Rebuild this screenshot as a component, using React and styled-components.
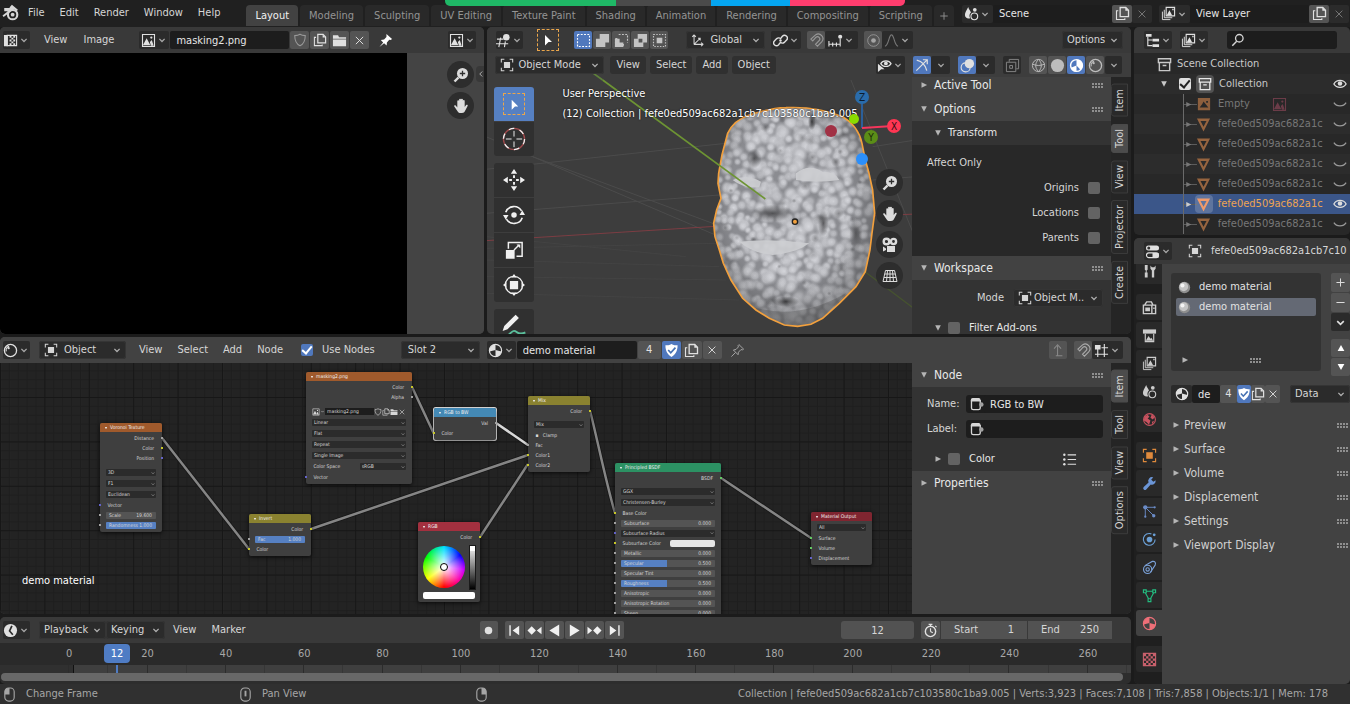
import React from 'react';
import styled, { createGlobalStyle, css } from 'styled-components';

const GlobalStyle = createGlobalStyle`
  * { box-sizing: border-box; }
  html, body { margin: 0; background: #1b1b1b; overflow: hidden; }
  body, button, input, select {
    font-family: "DejaVu Sans Condensed", "DejaVu Sans", sans-serif;
    font-size: 11px;
    line-height: 14px;
    color: #d6d6d6;
  }
  button, input, select { margin: 0; padding: 0; border: 0; background: none; outline: none; }
  svg { display: block; flex: none; }
`;

/* ---------- icons ---------- */

const S = { fill: 'none', stroke: 'currentColor', strokeWidth: 1.2 };
const F = { fill: 'currentColor', stroke: 'none' };

const ICONS = {
  blender: <><path d="M1 11.5 8.2 6H3V4.6h7L8.3 3.2 9.4 2l5 4.2" {...S} strokeWidth="1.8" /><circle cx="10" cy="10" r="4.4" {...S} strokeWidth="2" /><circle cx="10" cy="10" r="1.8" {...F} /></>,
  chevron: <path d="m4.500 6.500 3.500 3.500 3.500-3.500" {...S} strokeWidth="1.7" />,
  imageEditor: <><path d="M1 2h4v12H1z" {...F} /><path d="M4.500 2.500h10v11h-10z" {...S} /><path d="M7 3h2v2H7zM11 3h2v2h-2zM9 5h2v2H9zM7 7h2v2H7zM11 7h2v2h-2zM9 9h2v2H9zM7 11h2v2H7zM11 11h2v2h-2z" {...F} /></>,
  image: <><path d="M1.600 1.600h12.800v12.800H1.600z" {...S} /><path d="M2 13 6 5.500 10 13zM9.500 9.500l2-2 2 6h-3z" {...F} /><circle cx="11" cy="4.800" r="1.200" {...F} /></>,
  imageSolid: <path fillRule="evenodd" d="M1 1h14v14H1zM3 12h10L7.500 5 6 8zM10.500 4.500h2v2h-2z" {...F} />,
  shield: <path d="M8 1.500c2 1.300 4 1.500 6 1.500 0 6-2 9.500-6 11.500C4 12.500 2 9 2 3c2 0 4-.2 6-1.500z" {...S} />,
  shieldCheck: <><path d="M8 1c2 1.300 4.500 1.500 6.500 1.500 0 6.500-2.500 10-6.500 12.500C4 12.500 1.500 9 1.500 2.500 3.500 2.500 6 2.300 8 1z" {...F} /><path d="m4.500 7.500 2.700 3 5-5.500" fill="none" stroke="#4772b3" strokeWidth="1.800" /></>,
  copy: <><path d="M5.500 1.600h6L14.400 4.500v6.900H5.500z" {...S} strokeWidth="1.400" /><path d="M11 1.500V5h3.500z" {...F} /><path d="M3.500 5H1.600v9.400h8.900v-1.400" {...S} /></>,
  folder: <path d="M1 2.500h5.500l1 2H15V6H1zM1 7h14v7H1z" {...F} />,
  close: <path d="m3.500 3.500 9 9m0-9-9 9" {...S} />,
  pin: <path d="m9 1 6 5.500-1.500 1-1.500-.3L9.500 10l-.3 3.200L6.500 11l-5 4 4-5L3 7.500 6.500 7 9 4.300z" {...F} />,
  pinOutline: <path d="m9.500 1.700 5 4.800-1.200.8-1.600-.3-2.700 2.800-.4 2.700-5-5 2.800-.6 2.500-2.700-.2-1.700zM6 10l-4.500 4.500" {...S} strokeWidth="1" />,
  zoom: <><circle cx="9.500" cy="6.500" r="5.500" {...F} /><path d="m5.500 10.500-4 4" {...S} strokeWidth="2.400" /><path d="M9.500 3.800v5.400M6.800 6.500h5.400" stroke="#2e2e2e" strokeWidth="1.300" /></>,
  hand: <path d="M4.300 9.500V3.200a.9.900 0 0 1 1.800 0V7V1.800a.9.900 0 0 1 1.900 0V7V1.600a.9.900 0 0 1 1.900 0V7.300V3a.9.900 0 0 1 1.800 0v6l1.300-1.800c.9-.9 2.100-.2 1.600.8L12 13c-.5 1.200-1.500 2-3 2H7.500c-1.300 0-2-.5-2.800-1.600L1.300 8.600c-.6-1 .6-1.800 1.400-1z" {...F} />,
  camera: <><circle cx="4.500" cy="4.500" r="2.800" {...S} strokeWidth="2.400" /><circle cx="11.500" cy="4.500" r="2.600" {...S} strokeWidth="2.400" /><path d="M5 9h8v6H5zM1 9.500l3 2v1.500l-3 1.500z" {...F} /></>,
  gridPlane: <path d="M3.500 2.500h9l2.500 11H1zM2.800 6h10.500M2 9.500h12M8 2.500v11M5.500 2.500l-1 11M10.500 2.500l1 11" {...S} strokeWidth="1" />,
  view3d: <><path d="M1 6.500h7M0 11.500h13M5 5 3 15M10 9l-1 6" {...S} /><circle cx="11" cy="4.500" r="3.500" {...F} /></>,
  cursor: <path d="m5 3 7 7H8.500L5 13.500z" {...F} />,
  selBox: <path d="M1.600 1.600h12.800v12.800H1.600z" {...S} strokeDasharray="2 1.500" />,
  selExt: <path d="M5 1h10v9h-4v5H1V6h4z" {...F} />,
  selSub: <><path d="M5 1.600h9.400V10M1.600 6H5M1.600 6v8.400H10V11" {...S} strokeDasharray="2 1.500" /><path d="M1 6h5v4h4v5H1z" {...F} /></>,
  selDiff: <path fillRule="evenodd" d="M5 1h10v9h-4v5H1V6h4zM6 6v4h4V6z" {...F} />,
  selInt: <><path d="M1.600 1.600h12.800v12.800H1.600z" {...S} strokeDasharray="1.500 1.500" /><path d="M5 5h6v6H5z" {...F} /></>,
  axes: <path d="M3.500 13V2m0 0-2 2.500M3.500 2l2 2.500M3.500 13H14m0 0-2.500-2M14 13l-2.500 2M3.500 13l7-7M8 6h2.500v2.500" {...S} />,
  link: <><path d="M7.500 10.500 6 12.500a3 3 0 0 1-4.500-4L4 6a3 3 0 0 1 4.500.5M8.500 5.500l1.500-2a3 3 0 0 1 4.500 4L12 10a3 3 0 0 1-4.500-.5" {...S} strokeWidth="1.500" /><circle cx="8" cy="8" r="1.300" {...F} /></>,
  magnet: <path d="M2 6.500 7 2a5 5 0 0 1 6.500 7.500L9 14l-2-2 4-4a2.500 2.500 0 0 0-3.500-3.500L4 8.500z" {...S} />,
  snapInc: <><path d="M1 8.500v6M5 10v4.500M9 10v4.500M13 6v8.500M1 12h12" {...S} /><circle cx="13" cy="4" r="2.200" {...F} /></>,
  prop: <><circle cx="8" cy="8" r="6.200" {...S} strokeWidth=".8" /><circle cx="8" cy="8" r="2.500" {...F} /></>,
  curve: <path d="M1 14c4 0 4-12 7-12s3 12 7 12" {...S} />,
  object: <><path d="M4.500 4.500h7v7h-7z" {...F} /><path d="M1.500 5V1.500H5M11 1.500h3.500V5M14.500 11v3.500H11M5 14.500H1.500V11" {...S} /></>,
  eyeCursor: <><path d="M4 6c2-4 9-4 11 0-2 4-9 4-11 0z" {...S} /><circle cx="9.500" cy="5.800" r="2" {...F} /><path d="m1 6 7 6H4.500L1 15z" {...F} /></>,
  gizmo: <path d="M2 2.500c6 1.500 10 5.500 11.500 12M1.500 14.500l12-12M9 2h5v5" {...S} strokeWidth="1.400" />,
  overlay: <><circle cx="10" cy="6" r="5" {...F} /><circle cx="6" cy="10" r="4.800" {...S} /></>,
  xray: <path d="M1.500 4.500h10v10h-10zM4.500 4V1.500h10v10H12M5 8h3v3H5z" {...S} strokeWidth="1" />,
  wire: <><circle cx="8" cy="8" r="6.500" {...S} strokeWidth="1" /><path d="M1.500 6.500c4 2 9 2 13 0M8 1.500c-4 4-4 9 0 13M8 1.500c4 4 4 9 0 13" {...S} strokeWidth="1" /></>,
  solid: <circle cx="8" cy="8" r="7" {...F} />,
  matPreview: <><circle cx="8" cy="8" r="6.300" {...S} strokeWidth="1.500" /><path d="M8 1.500V8l4.500 4.700A6.500 6.500 0 0 0 8 1.500zM8 8 2 10.500A6.500 6.500 0 0 0 8 14.500z" {...F} /></>,
  rendered: <><circle cx="8" cy="8" r="6.500" {...S} strokeWidth="1.400" /><path d="M3.500 9a4.500 4.500 0 0 1 3-5.500" {...S} /><circle cx="6" cy="5.500" r="1.200" {...F} /></>,
  material: <><circle cx="8" cy="8" r="6.500" {...S} strokeWidth="1.300" /><path d="M8 1.500A6.500 6.500 0 0 0 1.700 9L8 7.500zM8 7.500 14.300 9A6.500 6.500 0 0 1 8 14.500z" {...F} /></>,
  scene: <><path d="M4.500 1C2.500 5 1 7 1 9.500 1 12.500 4 14 6.500 13 5 10 6.500 7.500 7.500 7 6.500 4.500 5 3.500 4.500 1z" {...F} /><circle cx="11" cy="11" r="3.600" {...S} /><circle cx="11.500" cy="4" r="2" {...F} /></>,
  layers: <><path d="M5.500 1.500h9v9h-9z" {...S} /><path d="m6 10 3-5.500 3 5.500zM12 3h1.500v1.500H12z" {...F} /><path d="M3.500 4v8.500H12M1.500 6v8.500H10" {...S} strokeWidth="1" /></>,
  outliner: <><path d="M1 1h6v3H1zM8 6h7v3H8zM8 12h7v3H8z" {...F} /><path d="M3 4v9.500h5M3 7.500h5" {...S} /></>,
  search: <><circle cx="9.500" cy="6" r="4.300" {...S} strokeWidth="1.500" /><path d="m6.500 9.500-5 5" {...S} strokeWidth="1.700" /></>,
  collection: <path d="M1.500 1.800h13v4h-13zM2.500 6v8.500h11V6M6 9h4" {...S} strokeWidth="1.500" />,
  mesh: <path d="M1 1.500h14L8 15.500zM4.800 4.300 8 10.500l3.200-6.200z" fill="currentColor" fillRule="evenodd" />,
  eye: <><path d="M1 8c3-5.500 11-5.500 14 0-3 5-11 5-14 0z" {...S} strokeWidth="1.500" /><circle cx="8" cy="7.500" r="2.600" {...F} /></>,
  eyeOff: <path d="M1 6.500c3 5 11 5 14 0" {...S} strokeWidth="1.400" />,
  props: <><rect x="1" y="1.500" width="14" height="5.500" rx="2.700" {...F} /><rect x="1.600" y="9.500" width="12.800" height="5" rx="2.500" {...S} /><path d="M8 9.500h6.500v5H8z" {...F} /><circle cx="4" cy="4.200" r="1.600" fill="#333" /></>,
  tool: <path d="M3 1h3v5l-1 1v2h1v5.500H3V9h1V7L3 6zM9 1.500v3.500l1.500 2v7.500h2.500V7L14.500 5V1.500l-1.500 2h-2.500z" {...F} />,
  render: <><path d="M1.500 5.500h9v9h-9zM10.500 5.500h4v9h-4M3 5l2-3h5l1.500 3" {...S} strokeWidth="1.500" /><path d="M3.500 8h5v4h-5zM12 8h1.500v1.500H12z" {...F} /></>,
  output: <><path d="M1 1.500h14V6H1z" {...F} /><path d="M3.500 6v8.500h9V6" {...S} /><path d="m4 13.500 3-5 2 3 1-1 2 3z" {...F} /></>,
  world: <><circle cx="8" cy="8" r="6.300" {...S} /><path d="m2.500 5 3.500-2 2 2-2 2 3 2-1.500 4.500L5 11 2 9zM10.500 2.500l3 3-2 2.500-2.500-2zM10.500 10.500l2.500-1-2 3.500z" {...F} /></>,
  wrench: <path d="M14.500 4.500A4 4 0 0 1 9.300 9L4.500 14.300a1.600 1.600 0 0 1-2.700-2.500L7 7a4 4 0 0 1 5-5.500L9.800 3.800l2.200 2.400z" {...F} />,
  particles: <><circle cx="3.500" cy="3.500" r="2.300" {...F} /><path d="M3.500 4v9M4 3.500h9M4 4l8 8" {...S} strokeWidth="1" /><circle cx="3.500" cy="13.500" r="1.200" {...F} /><circle cx="13.500" cy="3.500" r="1.200" {...F} /><circle cx="12.500" cy="12.500" r="1.800" {...F} /></>,
  physics: <><path d="M10 2a6.300 6.300 0 1 0 4 6" {...S} /><circle cx="8" cy="8" r="3" {...F} /><circle cx="13" cy="3" r="1.500" {...F} /></>,
  constraint: <><path d="m3 6 8-4.500c3-.5 4 1.500 3 4L9 13" {...S} /><circle cx="6" cy="10" r="4.400" {...S} /><circle cx="6" cy="10" r="1.800" {...S} /></>,
  meshData: <path d="M1.500 2h3v3h-3zM11.500 2h3v3h-3zM6.500 11.500h3v3h-3zM4.500 3.500h7M3.500 5l3.500 6.500M12.500 5 9 11.500" {...S} />,
  texture: <><path d="M1.500 1.500h13v13h-13z" {...S} /><path d="M2 2h2.400v2.400H2zM6.800 2h2.400v2.400H6.800zM11.600 2H14v2.400h-2.400zM4.400 4.400h2.400v2.400H4.400zM9.200 4.400h2.400v2.400H9.200zM2 6.800h2.400v2.400H2zM6.800 6.800h2.400v2.400H6.800zM11.600 6.800H14v2.400h-2.400zM4.400 9.200h2.400v2.400H4.400zM9.200 9.200h2.400v2.400H9.200zM2 11.600h2.400V14H2zM6.800 11.600h2.400V14H6.800zM11.600 11.600H14V14h-2.400z" {...F} /></>,
  plus: <path d="M8 3v10M3 8h10" {...S} />,
  minus: <path d="M3 8h10" {...S} />,
  up: <path d="m8 4 4.500 8h-9z" {...F} />,
  down: <path d="M3.500 4h9L8 12z" {...F} />,
  parent: <path d="M5.500 14.500H13M7.500 14V3M3.500 6.500l4-4.500 4 4.500" {...S} />,
  snapNode: <><path d="M4 4v11M11 1v14M1 12h14M8 5h7" {...S} /><path d="M1 2h6v5H1z" {...F} /></>,
  node: <><path d="M1.700 3.500v9c0 1.500.5 2 2 2h6c1.500 0 2-.5 2-2v-9" {...S} strokeWidth="1.500" /><path d="M1 5V3q0-2 2-2h7q2 0 2 2v2z" {...F} /><circle cx="13" cy="8.500" r="2.500" fill="#a0a0a0" /></>,
  list: <><path d="M6 3h9M6 8h9M6 13h9" {...S} strokeWidth="1.200" /><circle cx="2.500" cy="3" r="1.300" {...F} /><circle cx="2.500" cy="8" r="1.300" {...F} /><circle cx="2.500" cy="13" r="1.300" {...F} /></>,
  clock: <><circle cx="8" cy="8" r="7" {...F} /><path d="M9.500 3 7 8.500l3.500 4" fill="none" stroke="#2b2b2b" strokeWidth="1.800" /></>,
  stopwatch: <><circle cx="8" cy="9" r="5.500" {...S} strokeWidth="1.500" /><path d="M8 9V5.500M8 9l2.500 1.500M6 1.500h4M8 1.500v2M13 3l1.500 1.500" {...S} /></>,
  record: <circle cx="8" cy="8" r="4" {...F} />,
  first: <path d="M2.500 2.500H4v11H2.500zM13 3v10L6 8z" {...F} />,
  prevKey: <path d="m5 3.500 4.500 4.500L5 12.500.5 8zM15.500 4v8L10.500 8z" {...F} />,
  playBack: <path d="M13 1.500v13L2.500 8z" {...F} />,
  play: <path d="M3 1.500v13L13.500 8z" {...F} />,
  nextKey: <path d="m11 3.500 4.500 4.500-4.500 4.500L6.500 8zM.5 4v8l5-4z" {...F} />,
  last: <path d="M12 2.500h1.500v11H12zM3 3v10l7-5z" {...F} />,
  move: <path d="m8 0 2.300 3.500H5.700zM8 16l2.300-3.500H5.700zM0 8l3.500-2.300v4.600zM16 8l-3.500-2.300v4.600zM7.300 4.500h1.400v2H7.300zM7.300 9.500h1.400v2H7.300zM4.500 7.300h2v1.400h-2zM9.500 7.300h2v1.400h-2z" {...F} />,
  rotate: <><path d="M2 6A6.400 6.400 0 0 1 13.500 5M14 10A6.400 6.400 0 0 1 2.500 11" {...S} /><circle cx="8" cy="8" r="2" {...F} /><path d="m0 8 4 0-2 3.500zM12 8h4l-2-3.500z" {...F} /></>,
  scale: <><path d="M3.500 7V2h11v11H10" {...S} /><path d="M1.500 8h7v7h-7zM10 3.500h3v3z" {...F} /><path d="m8 8 4-4" {...S} /></>,
  transform: <><circle cx="8" cy="8" r="6.300" {...S} strokeWidth="1" /><path d="M5 5h6v6H5zM8 0l2 2.500H6zM8 16l2-2.500H6zM0 8l2.500-2v4zM16 8l-2.500-2v4z" {...F} /></>,
  cursor3d: <><circle cx="8" cy="8" r="6.500" fill="none" stroke="#a04a4c" strokeWidth=".8" /><circle cx="8" cy="8" r="6.500" {...S} strokeWidth=".8" strokeDasharray="3.400 3.400" /><path d="M8 3v3.500M8 9.500V13M3 8h3.500M9.500 8H13" {...S} strokeWidth=".6" /></>,
  annotate: <><path d="m1 11 1-3L9 1l2 2-7 7z" {...F} /><path d="M2 14c3 1 4-3 6-3s2 3 7 1" fill="none" stroke="#5bbf9c" strokeWidth="1.200" /></>,
  mouseL: <><rect x="3" y="1" width="10" height="14" rx="4" {...S} /><path d="M3 8V5q0-4 4-4h1v7z" {...F} /></>,
  mouseM: <><rect x="3" y="1" width="10" height="14" rx="4" {...S} /><path d="M7 4h2v6H7z" {...F} /></>,
  mouseR: <><rect x="3" y="1" width="10" height="14" rx="4" {...S} /><path d="M13 8V5q0-4-4-4H8v7z" {...F} /></>,
  ball: <><circle cx="8" cy="8" r="7" fill="#8e8e8e" /><circle cx="7" cy="7" r="5.500" fill="#c4c4c4" /><circle cx="5.500" cy="5.500" r="2.500" fill="#f4f4f4" /></>,
  triRight: <path d="m4 3.500 9 4.500-9 4.500z" {...F} />,
  triDown: <path d="M3.500 3.500h9L8 12.500z" {...F} />,
  left: <path d="M10 4 6 8l4 4" {...S} />,
};

const Icon = ({ n, s = 16, c }) => (
  <svg width={s} height={s} viewBox="0 0 16 16" color={c} aria-hidden="true">{ICONS[n]}</svg>
);

/* ---------- shared parts ---------- */

const Screen = styled.div`
  display: flex;
  flex-direction: column;
  height: 100vh;
  overflow: hidden;
`;

const Row = styled.div`
  display: flex;
  align-items: center;
  gap: ${p => p.$gap || 0}px;
  margin-left: ${p => (p.$push ? 'auto' : (p.$ml || 0) + 'px')};
  padding-left: ${p => p.$pl || 0}px;
`;

const Area = styled.section`
  position: relative;
  display: flex;
  flex-direction: column;
  min-width: 0;
  min-height: 0;
  overflow: hidden;
  border-radius: 5px;
  background: ${p => p.$bg || '#424242'};
`;

const Header = styled.header`
  position: relative;
  display: flex;
  flex: none;
  align-items: center;
  height: ${p => p.$h || 26}px;
  padding: 0 ${p => p.$pr || 8}px 0 ${p => p.$pl || 3}px;
  background: ${p => p.$bg || '#393939'};
  white-space: nowrap;
`;

const Button = styled.button`
  display: flex;
  flex: none;
  align-items: center;
  justify-content: center;
  width: ${p => (p.$w ? p.$w + 'px' : 'auto')};
  height: ${p => p.$h || 18}px;
  color: ${p => (p.$dim ? '#7d7d7d' : '#e0e0e0')};
  background: ${p => (p.$on ? '#5078bd' : p.$dark ? '#2b2b2b' : p.$clear ? 'transparent' : '#545454')};
  border-radius: 2px;
`;

const MenuButton = styled.button`
  height: 18px;
  padding: 0 ${p => p.$p || 0}px;
  border-radius: 3px;
  background: ${p => (p.$boxed ? '#303030' : 'none')};
`;

const DropBox = styled.label`
  position: relative;
  display: flex;
  flex: none;
  align-items: center;
  gap: 2px;
  width: ${p => p.$w}px;
  height: 18px;
  padding: 0 3px 0 5px;
  background: #2b2b2b;
  border-radius: 3px;
  box-shadow: inset 0 0 0 1px #353535;
  & select {
    flex: 1;
    min-width: 0;
    appearance: none;
    padding-left: ${p => p.$indent || 0}px;
  }
`;

const Drop = ({ w, icon, value, indent }) => (
  <DropBox $w={w} $indent={indent}>
    {icon && <Icon n={icon} s={14} />}
    <select aria-label={value} defaultValue={value}><option>{value}</option></select>
    <Icon n="chevron" s={12} c="#b0b0b0" />
  </DropBox>
);

const IconDrop = ({ w = 28, icon, label, c }) => (
  <Button $dark $w={w} aria-label={label} aria-haspopup="menu">
    {icon && <Icon n={icon} s={15} c={c} />}
    <Icon n="chevron" s={12} c="#a8a8a8" />
  </Button>
);

const TextField = styled.input`
  flex: none;
  width: ${p => p.$w}px;
  height: 18px;
  padding: 0 6px;
  color: #e6e6e6;
  background: #1d1d1d;
  border-radius: 2px;
`;

const Check = styled.input.attrs({ type: 'checkbox' })`
  appearance: none;
  flex: none;
  display: grid;
  place-items: center;
  width: 12px;
  height: 12px;
  border-radius: 2px;
  background: #636363;
  &:checked { background: ${p => p.$white ? '#e0e0e0' : '#5078bd'}; }
  &:checked::after {
    content: '';
    width: 4px;
    height: 8px;
    margin-bottom: 2px;
    border: solid ${p => p.$white ? '#222' : '#fff'};
    border-width: 0 2px 2px 0;
    transform: rotate(40deg);
  }
`;

const Dots = styled.i`
  width: 11px;
  height: 5px;
  margin-left: auto;
  background: radial-gradient(circle at 1px 1px, #8f8f8f 1px, transparent 1px) 0 0 / 3px 3px;
`;

/* ---------- top bar ---------- */

const TopBar = styled.nav`
  position: relative;
  display: flex;
  flex: none;
  height: 27px;
  padding: 0 1px 0 2px;
  background: #202020;
  white-space: nowrap;
`;

const TopGroup = styled.div`
  display: flex;
  align-items: center;
  flex: none;
  height: 25px;
  gap: ${p => p.$gap || 0}px;
  margin-left: ${p => p.$ml || 0}px;
`;

const Tabs = styled.div`
  display: flex;
  align-self: flex-end;
  gap: 2px;
  margin: 0 0 1px 26px;
`;

const Tab = styled.button`
  height: 21px;
  padding: 0 ${p => p.$p || 9}px;
  color: ${p => (p.$on ? '#f0f0f0' : '#949494')};
  background: ${p => (p.$on ? '#424242' : '#292929')};
  border-radius: 4px 4px 0 0;
`;

const Banner = styled.div`
  position: absolute;
  top: 0;
  left: 445px;
  display: flex;
  width: 460px;
  height: 6px;
  overflow: hidden;
  border-radius: 0 0 5px 5px;
`;

const BannerPart = styled.span`
  flex: ${p => p.$w};
  background: ${p => p.$c};
`;

const WORKSPACES = ['Layout', 'Modeling', 'Sculpting', 'UV Editing', 'Texture Paint', 'Shading', 'Animation', 'Rendering', 'Compositing', 'Scripting'];

const DataBlock = ({ icon, value }) => (
  <TopGroup>
    <IconDrop w={31} icon={icon} label={value + ' list'} />
    <TextField $w={119} aria-label={value} defaultValue={value} />
    <Button $w={20} aria-label="New"><Icon n="copy" s={15} /></Button>
    <Button $w={20} $dark $dim aria-label="Remove"><Icon n="close" s={12} /></Button>
  </TopGroup>
);

const Top = () => (
  <TopBar>
    <TopGroup><Icon n="blender" s={17} /></TopGroup>
    <TopGroup $gap={15} $ml={9}>
      {['File', 'Edit', 'Render', 'Window', 'Help'].map(m => <MenuButton key={m}>{m}</MenuButton>)}
    </TopGroup>
    <Tabs>
      {WORKSPACES.map((w, i) => <Tab key={w} $on={i === 0}>{w}</Tab>)}
      <Tab $p={4} aria-label="Add workspace"><Icon n="plus" s={12} /></Tab>
    </Tabs>
    <Row $push $gap={7}>
      <DataBlock icon="scene" value="Scene" />
      <DataBlock icon="layers" value="View Layer" />
    </Row>
    <Banner>
      <BannerPart $w={171} $c="#1fb866" />
      <BannerPart $w={95} $c="#4a4a4a" />
      <BannerPart $w={79} $c="#05a5f0" />
      <BannerPart $w={115} $c="#ff3d6e" />
    </Banner>
  </TopBar>
);

/* ---------- image editor ---------- */

const ImageBody = styled.div`
  display: flex;
  flex: 1;
  background: #444;
`;

const BlackImage = styled.div`
  width: 84%;
  background: #000;
`;

const NavColumn = styled.div`
  display: flex;
  flex-direction: column;
  gap: 4px;
  margin: ${p => p.$mt}px ${p => p.$mr || 0}px 0 auto;
`;

const RoundButton = styled.button`
  display: grid;
  place-items: center;
  width: 27px;
  height: 27px;
  color: #dcdcdc;
  background: #2d2d2d;
  border-radius: 50%;
`;

const Toggle = styled.button`
  display: grid;
  place-items: center;
  align-self: flex-start;
  width: 8px;
  height: 16px;
  margin-top: 13px;
  background: #383838;
  border-radius: 4px 0 0 4px;
  overflow: hidden;
`;

const ImageEditor = () => (
  <Area style={{ flex: '484 1 0' }}>
    <Header>
      <IconDrop w={27} icon="imageEditor" label="Editor type" />
      <Row $gap={16} $ml={14}><MenuButton>View</MenuButton><MenuButton>Image</MenuButton></Row>
      <Row $ml={25} $gap={1}>
        <IconDrop w={30} icon="image" label="Browse image" />
        <TextField $w={119} aria-label="Image name" defaultValue="masking2.png" />
        <Button $w={19} $dim aria-label="Fake user"><Icon n="shield" s={14} c="#999" /></Button>
        <Button $w={19} aria-label="New image"><Icon n="copy" s={14} /></Button>
        <Button $w={19} aria-label="Open image"><Icon n="folder" s={15} /></Button>
        <Button $w={19} aria-label="Unlink"><Icon n="close" s={13} /></Button>
      </Row>
      <Row $ml={9}><Button $clear aria-label="Pin"><Icon n="pin" s={15} c="#fff" /></Button></Row>
      <Row $push><IconDrop icon="image" label="Display channels" /></Row>
    </Header>
    <ImageBody>
      <BlackImage />
      <NavColumn $mt={8} $mr={2}>
        <RoundButton aria-label="Zoom"><Icon n="zoom" /></RoundButton>
        <RoundButton aria-label="Pan"><Icon n="hand" /></RoundButton>
      </NavColumn>
      <Toggle aria-label="Open sidebar"><Icon n="left" s={10} /></Toggle>
    </ImageBody>
  </Area>
);

/* ---------- 3D viewport ---------- */

const SceneSvg = styled.svg`
  position: absolute;
  top: 0;
  left: 0;
  width: 643px;
  height: 307px;
`;

const ViewText = styled.div`
  position: absolute;
  top: 57px;
  left: 75px;
  line-height: 20px;
  color: #fff;
  text-shadow: 0 0 2px #000;
  white-space: nowrap;
`;

const ViewBody = styled.div`
  position: relative;
  display: flex;
  flex: 1;
  min-height: 0;
`;

const ToolShelf = styled.div`
  display: flex;
  flex-direction: column;
  gap: 7px;
  padding: 10px 0 0 7px;
`;

const ToolGroup = styled.div`
  display: flex;
  flex-direction: column;
  flex: none;
  gap: 1px;
  border-radius: 3px;
  overflow: hidden;
`;

const ToolButton = styled.button`
  display: grid;
  place-items: center;
  width: 40px;
  height: 34px;
  color: #f0f0f0;
  background: ${p => (p.$on ? '#5680c2' : '#303030')};
`;

const Side = styled.aside`
  display: flex;
  flex: none;
  width: 219px;
  overflow: hidden;
  background: #252525;
`;

const Panels = styled.div`
  flex: none;
  width: 199px;
  margin-top: ${p => p.$scroll || 0}px;
  background: ${p => p.$bg || '#333'};
`;

const PanelHead = styled.div`
  display: flex;
  align-items: center;
  gap: 5px;
  height: 24px;
  padding: 0 8px 0 ${p => (p.$sub ? 21 : 7)}px;
  color: #e8e8e8;
  font-size: ${p => (p.$sub ? 11 : 12)}px;
  background: ${p => p.$bg || (p.$sub ? '#333' : '#424242')};
`;

const PanelBody = styled.div`
  display: flex;
  flex-direction: column;
  gap: ${p => p.$gap || 7}px;
  padding: ${p => p.$pad};
  background: ${p => p.$bg || '#333'};
`;

const OptionRow = styled.label`
  display: flex;
  align-items: center;
  justify-content: ${p => (p.$start ? 'flex-start' : 'flex-end')};
  gap: ${p => p.$gap || 9}px;
  height: 18px;
`;

const SideTabs = styled.div`
  display: flex;
  flex-direction: column;
  gap: 7px;
  padding-top: 7px;
`;

const SideTab = styled.button`
  width: 17px;
  padding: 4px 0;
  writing-mode: vertical-rl;
  transform: rotate(180deg);
  text-align: center;
  background: ${p => (p.$on ? '#4c4c4c' : '#292929')};
  border: 1px solid ${p => (p.$on ? '#4c4c4c' : '#3c3c3c')};
  border-radius: 0 3px 3px 0;
`;

const OUTLINE = 'M725 160C735 138 752 118 790 105C830 92 860 84 900 83C960 80 1020 90 1070 110C1105 132 1122 160 1128 190L1138 240L1148 275L1160 330L1166 400L1158 460L1152 510L1138 575L1110 620L1060 670L1010 715L975 733L935 739L895 735L850 715L810 690L770 655L735 600L712 550L700 510L687 470L683 430L692 390L705 355L696 310L698 280L708 225Z';

// pebbled surface: jittered grid of shaded bumps, clipped to the head outline
const surface = (() => {
  let seed = 7;
  const rnd = () => (seed = (seed * 16807) % 2147483647) / 2147483647;
  const bumps = [];
  for (let y = 85; y < 745; y += 22) {
    for (let x = 675; x < 1175; x += 24) {
      // bumps get smaller towards the sides of the head
      const edge = Math.abs(x - 925) / 250;
      bumps.push([x + rnd() * 24, y + rnd() * 22, (15 + rnd() * 13) * (1 - edge * 0.3), 0.6 + rnd() * 0.4]);
    }
  }
  const pits = Array.from({ length: 46 }, () => [700 + rnd() * 450, 110 + rnd() * 590, 6 + rnd() * 12, 0.15 + rnd() * 0.3]);
  return { bumps, pits };
})();

const Scene = () => (
  <SceneSvg viewBox="0 0 643 307">
    <defs>
      <radialGradient id="bump">
        <stop offset="0" stopColor="#d6d7dc" />
        <stop offset=".45" stopColor="#c9cacf" stopOpacity=".9" />
        <stop offset="1" stopColor="#a6a7ac" stopOpacity="0" />
      </radialGradient>
      <radialGradient id="pit">
        <stop offset="0" stopColor="#2c2c2e" />
        <stop offset="1" stopColor="#2c2c2e" stopOpacity="0" />
      </radialGradient>
      <radialGradient id="shade" cx=".47" cy=".42" r=".62">
        <stop offset=".6" stopColor="#333" stopOpacity="0" />
        <stop offset="1" stopColor="#222" stopOpacity=".45" />
      </radialGradient>
      <clipPath id="head"><path d={OUTLINE} /></clipPath>
    </defs>
    <g transform="translate(-1 53) scale(.3333)">
      <g fill="none" stroke="#4b4b4b" strokeWidth="3">
        <path d="M0 268 720 190M0 400 700 345M0 170 700 470M140 230 680 430M1095 0 1290 480M1160 200 1290 180M1160 300 1290 290" />
        <path d="M0 505 690 490M0 540 700 560M0 590 720 600M0 470 600 530M0 640 760 660" stroke="#434343" />
      </g>
      <path d="M0 482 690 439M1160 408 1290 402" stroke="#7c3d43" strokeWidth="3" />
      <path d="M1130 570 1290 690" stroke="#46532f" strokeWidth="4" />
      <g clipPath="url(#head)">
        <path d={OUTLINE} fill="#8b8c91" />
        {surface.bumps.map(([x, y, r, o], i) => <circle key={i} cx={x} cy={y} r={r} fill="url(#bump)" opacity={o} />)}
        {surface.pits.map(([x, y, r, o], i) => <circle key={i} cx={x} cy={y} r={r} fill="url(#pit)" opacity={o} />)}
        <path d="M930 280Q970 250 1010 275Q1050 275 1060 300Q990 310 930 300ZM740 300Q780 280 825 305L820 322Q770 325 740 300ZM760 485Q860 475 970 490Q930 520 860 525Q800 520 760 485Z" fill="#cdced2" opacity=".9" />
        <g fill="url(#pit)">
          <ellipse cx="860" cy="400" rx="65" ry="26" opacity=".75" />
          <ellipse cx="1012" cy="430" rx="16" ry="40" opacity=".7" />
          <ellipse cx="805" cy="235" rx="22" ry="30" opacity=".7" />
          <ellipse cx="978" cy="125" rx="12" ry="26" opacity=".9" />
          <ellipse cx="900" cy="665" rx="40" ry="16" opacity=".8" />
          <ellipse cx="1110" cy="460" rx="20" ry="50" opacity=".5" />
        </g>
        <path d={OUTLINE} fill="url(#shade)" />
        <path d="M800 680Q930 725 1080 640L980 745H860Z" fill="#444" opacity=".3" />
      </g>
      <path d={OUTLINE} fill="none" stroke="#f2a03d" strokeWidth="5" />
      <path d="M350 0 838 357" stroke="#6d9433" strokeWidth="5" />
      <path d="M315-25 350 0" stroke="#5e803a" strokeWidth="5" />
      <circle cx="927" cy="425" r="8" fill="#f2a03d" stroke="#222" strokeWidth="4" />
    </g>
  </SceneSvg>
);

const GizmoSvg = styled.svg`
  position: absolute;
  top: 60px;
  right: 227px;
`;

const AxisGizmo = () => (
  <GizmoSvg width="84" height="84" viewBox="820 87 84 84" fontSize="10" textAnchor="middle">
    <path d="M862 128V97" stroke="#2b5f99" strokeWidth="2" />
    <path d="M862 128 893 126" stroke="#f5365c" strokeWidth="2" />
    <circle cx="862" cy="97" r="7" fill="#2a6cab" />
    <circle cx="894" cy="126" r="7" fill="#ff3653" />
    <circle cx="871" cy="137" r="7" fill="#5b8d17" />
    <circle cx="854" cy="119" r="5" fill="#8bdc00" />
    <circle cx="831" cy="131" r="6" fill="#a13145" />
    <circle cx="862" cy="159" r="6" fill="#2c8ffa" />
    <text x="862" y="101" fill="#0d1d2e">Z</text>
    <text x="894" y="130" fill="#2e0d12">X</text>
    <text x="871" y="141" fill="#1a2906">Y</text>
  </GizmoSvg>
);

const SelectTool = styled.span`
  display: grid;
  place-items: center;
  width: 22px;
  height: 22px;
  border: 1px dashed #eba64b;
`;

const Tri = ({ open }) => <Icon n={open ? 'triDown' : 'triRight'} s={10} c="#b5b5b5" />;

const Viewport = () => (
  <Area $bg="#3d3d3d" style={{ flex: '643 1 0' }}>
    <Scene />
    <ViewText>User Perspective<br />(12) Collection | fefe0ed509ac682a1cb7c103580c1ba9.005</ViewText>
    <AxisGizmo />
    <Header $pl={9}>
      <IconDrop w={27} icon="view3d" label="Editor type" />
      <Row $ml={14}><SelectTool><Icon n="cursor" s={16} c="#fff" /></SelectTool></Row>
      <Row $ml={15} $gap={1}>
        {['selBox', 'selExt', 'selSub', 'selDiff', 'selInt'].map((n, i) => (
          <Button key={n} $w={18} $on={i === 0} aria-label={n}><Icon n={n} s={15} c={i ? '#c4c4c4' : '#fff'} /></Button>
        ))}
      </Row>
      <Row $ml={18} $gap={6}>
        <Drop w={79} icon="axes" value="Global" indent={3} />
        <IconDrop w={30} icon="link" label="Pivot point" />
        <Row>
          <Button $w={18} $dim aria-label="Snap"><Icon n="magnet" s={15} c="#999" /></Button>
          <IconDrop w={33} icon="snapInc" label="Snapping" />
        </Row>
        <Row>
          <Button $w={18} $dim aria-label="Proportional editing"><Icon n="prop" s={15} c="#a5a5a5" /></Button>
          <IconDrop w={31} icon="curve" label="Falloff" c="#777" />
        </Row>
      </Row>
      <Row $push><Drop w={61} value="Options" /></Row>
    </Header>
    <Header $h={24} $pl={8} $pr={9} $bg="transparent">
      <Drop w={109} icon="object" value="Object Mode" indent={2} />
      <Row $ml={6} $gap={4}>
        {['View', 'Select', 'Add', 'Object'].map(m => <MenuButton key={m} $boxed $p={6}>{m}</MenuButton>)}
      </Row>
      <Row $push $gap={8}>
        <IconDrop w={29} icon="eyeCursor" label="Visibility" />
        <Row><Button $w={18} $on aria-label="Gizmos"><Icon n="gizmo" s={14} /></Button><IconDrop w={19} label="Gizmo options" /></Row>
        <Row><Button $w={18} $on aria-label="Overlays"><Icon n="overlay" s={15} /></Button><IconDrop w={19} label="Overlay options" /></Row>
        <Button $w={18} $dark aria-label="X-ray"><Icon n="xray" s={15} c="#888" /></Button>
        <Row $gap={1}>
          {['wire', 'solid', 'matPreview', 'rendered'].map(n => (
            <Button key={n} $w={18} $on={n === 'matPreview'} aria-label={n}><Icon n={n} s={15} c={n === 'matPreview' ? '#fff' : '#bdbdbd'} /></Button>
          ))}
          <IconDrop w={17} label="Shading options" />
        </Row>
      </Row>
    </Header>
    <ViewBody>
      <ToolShelf>
        <ToolGroup>
          <ToolButton $on aria-label="Select box"><SelectTool><Icon n="cursor" s={15} c="#fff" /></SelectTool></ToolButton>
          <ToolButton aria-label="Cursor"><Icon n="cursor3d" s={26} /></ToolButton>
        </ToolGroup>
        <ToolGroup>
          {['move', 'rotate', 'scale', 'transform'].map(n => (
            <ToolButton key={n} aria-label={n}><Icon n={n} s={n === 'scale' ? 20 : 22} /></ToolButton>
          ))}
        </ToolGroup>
        <ToolGroup><ToolButton aria-label="Annotate"><Icon n="annotate" s={26} /></ToolButton></ToolGroup>
      </ToolShelf>
      <NavColumn $mt={92} $mr={9}>
        {['zoom', 'hand', 'camera', 'gridPlane'].map(n => (
          <RoundButton key={n} aria-label={n}><Icon n={n} /></RoundButton>
        ))}
      </NavColumn>
      <Side>
        <Panels $scroll={-4}>
          <PanelHead><Tri />Active Tool<Dots /></PanelHead>
          <PanelHead><Tri open />Options<Dots /></PanelHead>
          <PanelHead $sub><Tri open />Transform</PanelHead>
          <PanelBody $bg="#282828" $pad="9px 11px 9px 15px">
            <OptionRow as="div" $start>Affect Only</OptionRow>
            <OptionRow>Origins<Check /></OptionRow>
            <OptionRow>Locations<Check /></OptionRow>
            <OptionRow>Parents<Check /></OptionRow>
          </PanelBody>
          <PanelHead><Tri open />Workspace<Dots /></PanelHead>
          <PanelBody $pad="9px 8px 9px 0">
            <OptionRow as="div">Mode<Drop w={90} icon="object" value="Object M.." /></OptionRow>
          </PanelBody>
          <PanelHead $sub><Tri open /><OptionRow><Check />Filter Add-ons</OptionRow></PanelHead>
        </Panels>
        <SideTabs>
          {['Item', 'Tool', 'View', 'Projector', 'Create'].map(t => <SideTab key={t} $on={t === 'Tool'}>{t}</SideTab>)}
        </SideTabs>
      </Side>
    </ViewBody>
  </Area>
);

/* ---------- shader editor ---------- */

const Canvas = styled.div`
  position: relative;
  flex: 1;
  overflow: hidden;
  background: #232323;
`;

const Wires = styled.svg`
  position: absolute;
  top: 0;
  left: 0;
  width: 100%;
  height: 100%;
`;

const CanvasLabel = styled.div`
  position: absolute;
  left: 22px;
  bottom: 26px;
  color: #fff;
`;

const NodeBox = styled.div`
  position: absolute;
  padding-bottom: 2px;
  font-size: 5px;
  line-height: 7px;
  color: #d8d8d8;
  background: #3f3f3f;
  border-radius: 2px;
  box-shadow: 0 1px 4px #000b${p => (p.$active ? ', 0 0 0 1px #fff' : '')};
  white-space: nowrap;
`;

const NodeHead = styled.div`
  display: flex;
  align-items: center;
  gap: 2px;
  height: 9px;
  margin-bottom: 1px;
  padding-left: 4px;
  color: #eee;
  border-radius: 2px 2px 0 0;
  background: ${p => p.$c};
`;

const NodeRow = styled.div`
  position: relative;
  display: flex;
  align-items: center;
  height: ${p => (p.$tall ? 11 : 10)}px;
  margin-top: ${p => p.$gap || 0}px;
  padding: 0 ${p => (p.$out ? 8 : 6)}px;
  justify-content: ${p => (p.$out ? 'flex-end' : 'flex-start')};
`;

const Socket = styled.i`
  position: absolute;
  top: 4px;
  ${p => (p.$right ? css`right: -1px;` : css`left: -1px;`)}
  width: 2px;
  height: 2px;
  background: ${p => p.$c};
`;

const NodeDrop = styled.div`
  display: flex;
  flex: 1;
  align-items: center;
  height: 7px;
  background: #2b2b2b;
  border-radius: 1px;
  & select {
    flex: 1;
    min-width: 0;
    padding-left: 2px;
    appearance: none;
    font-size: 5px;
    line-height: 7px;
  }
`;

const NodeSlider = styled.div`
  display: flex;
  flex: 1;
  justify-content: space-between;
  height: 7px;
  padding: 0 4px 0 3px;
  border-radius: 1px;
  background: linear-gradient(90deg, #5680c2 ${p => p.$fill}%, #545454 ${p => p.$fill}%);
`;

const Swatch = styled.span`
  flex: none;
  width: ${p => p.$w}px;
  height: 7px;
  margin-left: auto;
  background: ${p => p.$c};
  border-radius: 2px;
`;

const Wheel = styled.div`
  display: grid;
  place-items: center;
  width: 42px;
  height: 42px;
  border-radius: 50%;
  background:
    radial-gradient(closest-side, #fff, #fff0 95%),
    conic-gradient(#00e0ff, #00f 15%, #c0f 27%, #ff00a0 37%, #f00 50%, #ff0 65%, #0f0 83%, #00e0ff);
  &::after {
    content: '';
    width: 6px;
    height: 6px;
    border: 1px solid #000;
    border-radius: 50%;
    background: #fff;
  }
`;

const ValueBar = styled.div`
  width: 5px;
  height: 43px;
  border-top: 5px solid #fff;
  outline: 1px solid #1a1a1a;
  background: linear-gradient(#ddd, #000);
`;

const PickerRow = styled.div`
  display: flex;
  justify-content: space-between;
  padding: ${p => (p.$last ? '0 5px 1px' : '4px 5px 3px')};
`;

const MiniField = styled.input`
  flex: 1;
  min-width: 0;
  height: 7px;
  padding-left: 2px;
  font-size: 5px;
  line-height: 7px;
  background: #1d1d1d;
`;

const Y = '#c7c729';
const G = '#a1a1a1';
const V = '#6363c7';
const SH = '#63c763';

const NODES = [
  { x: 100, y: 60, w: 62, title: 'Voronoi Texture', c: '#a05a2c', rows: [
    ['out', 'Distance', G], ['out', 'Color', Y], ['out', 'Position', V],
    ['sel', '3D', 4], ['sel', 'F1'], ['sel', 'Euclidean'],
    ['in', 'Vector', V], ['num', 'Scale', '19.600', 0, G], ['num', 'Randomness', '1.000', 100, G],
  ] },
  { x: 306, y: 9, w: 106, title: 'masking2.png', c: '#a05a2c', rows: [
    ['out', 'Color', Y], ['out', 'Alpha', G], ['image', 'masking2.png'],
    ['sel', 'Linear'], ['sel', 'Flat'], ['sel', 'Repeat'], ['sel', 'Single Image'], ['space', 'sRGB'], ['in', 'Vector', V],
  ] },
  { x: 434, y: 45, w: 62, title: 'RGB to BW', c: '#4489b5', active: true, rows: [['out', 'Val', G], ['in', 'Color', Y]] },
  { x: 528, y: 33, w: 62, title: 'Mix', c: '#8a8230', rows: [
    ['out', 'Color', Y], ['sel', 'Mix', 3], ['check', 'Clamp'], ['in', 'Fac', G], ['in', 'Color1', Y], ['in', 'Color2', Y],
  ] },
  { x: 249, y: 151, w: 62, title: 'Invert', c: '#8a8230', rows: [['out', 'Color', Y], ['num', 'Fac', '1.000', 100, G], ['in', 'Color', Y]] },
  { x: 418, y: 159, w: 62, title: 'RGB', c: '#a3303f', rows: [['out', 'Color', Y], ['picker']] },
  { x: 615, y: 100, w: 106, title: 'Principled BSDF', c: '#2c9163', rows: [
    ['out', 'BSDF', SH], ['sel', 'GGX', 3], ['sel', 'Christensen-Burley'], ['in', 'Base Color', Y],
    ['num', 'Subsurface', '0.000', 0, G], ['sel', 'Subsurface Radius', 0, V], ['color', 'Subsurface Color', Y],
    ['num', 'Metallic', '0.000', 0, G], ['num', 'Specular', '0.500', 49, G], ['num', 'Specular Tint', '0.000', 0, G],
    ['num', 'Roughness', '0.500', 49, G], ['num', 'Anisotropic', '0.000', 0, G], ['num', 'Anisotropic Rotation', '0.000', 0, G],
    ['num', 'Sheen', '0.000', 0, G],
  ] },
  { x: 811, y: 149, w: 61, title: 'Material Output', c: '#802530', rows: [
    ['sel', 'All'], ['in', 'Surface', SH], ['in', 'Volume', SH], ['in', 'Displacement', V],
  ] },
];

const MiniSelect = ({ v }) => (
  <NodeDrop>
    <select aria-label={v} defaultValue={v}><option>{v}</option></select>
    <Icon n="chevron" s={6} c="#aaa" />
  </NodeDrop>
);

const NodeLine = ({ row }) => {
  const [type, a, b, c, d] = row;
  if (type === 'out') return <NodeRow $out>{a}<Socket $right $c={b} /></NodeRow>;
  if (type === 'in') return <NodeRow><Socket $c={b} />&nbsp;{a}</NodeRow>;
  if (type === 'sel') return <NodeRow $tall={!c} $gap={b}>{c && <Socket $c={c} />}<MiniSelect v={a} /></NodeRow>;
  if (type === 'num') return <NodeRow><Socket $c={d} /><NodeSlider $fill={c}><span>{a}</span><span>{b}</span></NodeSlider></NodeRow>;
  if (type === 'color') return <NodeRow><Socket $c={b} />&nbsp;{a}<Swatch $w={45} $c="#e6e6e6" /></NodeRow>;
  if (type === 'check') return <NodeRow>&nbsp;▪&nbsp;&nbsp;&nbsp;{a}</NodeRow>;
  if (type === 'space') return <NodeRow $tall>&nbsp;<span style={{ flex: 1 }}>Color Space</span><MiniSelect v={a} /></NodeRow>;
  if (type === 'image') {
    return (
      <NodeRow $tall $gap={4}>
        <Icon n="image" s={8} /><Icon n="chevron" s={5} />
        <MiniField aria-label="Image" defaultValue={a} />
        <Icon n="shield" s={8} /><Icon n="copy" s={8} /><Icon n="folder" s={8} /><Icon n="close" s={8} />
      </NodeRow>
    );
  }
  return (
    <>
      <PickerRow><Wheel /><ValueBar /></PickerRow>
      <PickerRow $last><Swatch $w={52} $c="#fff" /></PickerRow>
    </>
  );
};

const LINKS = ['M162 75 249 186', 'M311 166 528 92', 'M412 24 434 71', 'M496 60 528 82', 'M480 174 528 101', 'M590 48C596 70 606 120 615 150', 'M721 115 811 175'];

const LabelRow = styled.label`
  display: flex;
  align-items: center;
  justify-content: space-between;
  width: 176px;
  height: 18px;
`;

const FieldBox = styled.span`
  display: flex;
  align-items: center;
  width: 137px;
  padding-left: 4px;
  background: #1d1d1d;
  border-radius: 3px;
`;

const NodeField = ({ label, value }) => (
  <LabelRow>{label}:<FieldBox><Icon n="node" s={14} /><TextField $w={115} defaultValue={value} /></FieldBox></LabelRow>
);

const EditorSplit = styled.div`
  display: flex;
  flex: 1;
  min-height: 0;
`;

const ShaderEditor = () => (
  <Area style={{ flex: '277 1 0' }}>
    <Header $bg="#424242">
      <IconDrop w={27} icon="rendered" label="Editor type" />
      <Row $ml={9}><Drop w={87} icon="object" value="Object" indent={4} /></Row>
      <Row $gap={15} $ml={13}>
        {['View', 'Select', 'Add', 'Node'].map(m => <MenuButton key={m}>{m}</MenuButton>)}
      </Row>
      <Row $ml={18}><OptionRow><Check defaultChecked />Use Nodes</OptionRow></Row>
      <Row $ml={26}><Drop w={79} value="Slot 2" indent={2} /></Row>
      <Row $ml={7} $gap={1}>
        <IconDrop w={29} icon="material" label="Browse material" />
        <TextField $w={120} aria-label="Material" defaultValue="demo material" />
        <Button $w={23}>4</Button>
        <Button $w={19} $on aria-label="Fake user"><Icon n="shieldCheck" s={15} c="#fff" /></Button>
        <Button $w={20} aria-label="New material"><Icon n="copy" s={15} /></Button>
        <Button $w={19} aria-label="Unlink"><Icon n="close" s={12} /></Button>
      </Row>
      <Row $ml={8}><Button $clear aria-label="Pin"><Icon n="pinOutline" s={15} c="#aaa" /></Button></Row>
      <Row $push $gap={7}>
        <Button $w={18} aria-label="Parent node tree"><Icon n="parent" s={14} c="#888" /></Button>
        <Row>
          <Button $w={18} aria-label="Snap"><Icon n="magnet" s={15} c="#aaa" /></Button>
          <IconDrop w={31} icon="snapNode" label="Snap element" />
        </Row>
      </Row>
    </Header>
    <EditorSplit>
      <Canvas>
        <Wires>
          <defs>
            <pattern id="minor" width="8.88" height="8.88" patternUnits="userSpaceOnUse" y="34">
              <path d="M.5 0V9M0 .5H9" stroke="#1e1e1e" fill="none" />
            </pattern>
            <pattern id="major" width="44.4" height="44.4" patternUnits="userSpaceOnUse" y="34">
              <path d="M.5 0V45M0 .5H45" stroke="#171717" fill="none" />
            </pattern>
          </defs>
          <rect width="100%" height="100%" fill="url(#minor)" />
          <rect width="100%" height="100%" fill="url(#major)" />
          {LINKS.map((d, i) => (
            <g key={d} fill="none">
              <path d={d} stroke="#161616" strokeWidth="4" />
              <path d={d} stroke={i === 3 ? '#d8d8d8' : '#858585'} strokeWidth="2.500" />
            </g>
          ))}
        </Wires>
        {NODES.map(n => (
          <NodeBox key={n.title} $active={n.active} style={{ left: n.x, top: n.y, width: n.w }}>
            <NodeHead $c={n.c}><Icon n="triDown" s={4} />{n.title}</NodeHead>
            {n.rows.map((r, i) => <NodeLine key={i} row={r} />)}
          </NodeBox>
        ))}
        <CanvasLabel>demo material</CanvasLabel>
      </Canvas>
      <Side>
        <Panels $bg="#424242">
          <PanelHead><Tri open />Node<Dots /></PanelHead>
          <PanelBody $pad="8px 8px 9px 15px">
            <NodeField label="Name" value="RGB to BW" />
            <NodeField label="Label" value="" />
          </PanelBody>
          <PanelHead $sub>
            <Tri /><OptionRow><Check />Color</OptionRow>
            <Row $push><Button $clear $w={68} aria-label="Presets"><Icon n="list" s={15} /></Button></Row>
          </PanelHead>
          <PanelHead><Tri />Properties<Dots /></PanelHead>
        </Panels>
        <SideTabs>
          {['Item', 'Tool', 'View', 'Options'].map(t => <SideTab key={t} $on={t === 'Item'}>{t}</SideTab>)}
        </SideTabs>
      </Side>
    </EditorSplit>
  </Area>
);

/* ---------- timeline ---------- */

const Ruler = styled.div`
  position: relative;
  display: flex;
  flex: none;
  align-items: center;
  height: 22px;
  padding: 0 4px 0 30px;
  background: #2a2a2a;
  color: #a8a8a8;
`;

const RulerCell = styled.span`
  flex: 1;
  text-align: center;
`;

const Frame = styled.span`
  position: absolute;
  top: 1px;
  left: 104px;
  width: 26px;
  height: 19px;
  line-height: 20px;
  text-align: center;
  color: #fff;
  background: #4f7cc4;
  border-radius: 4px;
  &::after {
    content: '';
    position: absolute;
    top: 21px;
    left: 12px;
    width: 2px;
    height: 8px;
    background: #4f7cc4;
  }
`;

const Track = styled.div`
  display: flex;
  flex: none;
  height: 8px;
  padding: 0 4px 0 30px;
  background: linear-gradient(90deg, #303030 73px, #111 73px, #111 74px, #3f3f3f 74px);
`;

const TrackCell = styled.i`
  flex: 1;
  border-right: 1px solid #363636;
  background: linear-gradient(#2c2c2c, #2c2c2c) center / 1px 100% no-repeat;
`;

const ScrollBar = styled.div`
  flex: none;
  height: 8px;
  margin: 0 8px 0 1px;
  background: #686868;
  border-radius: 4px;
`;

const NumberField = styled.input`
  width: ${p => p.$w}px;
  height: 18px;
  text-align: center;
  background: #525252;
  border-radius: 3px;
`;

const NumberLabel = styled.label`
  display: flex;
  align-items: center;
  width: ${p => p.$w}px;
  height: 18px;
  padding: 0 13px;
  background: #525252;
  & input { flex: 1; min-width: 0; text-align: right; }
`;

const STEPS = Array.from({ length: 14 }, (_, i) => i * 20);

const Timeline = () => (
  <Area $bg="#2d2d2d" style={{ flex: '0 0 67px' }}>
    <Header $pr={19}>
      <IconDrop w={27} icon="clock" label="Editor type" />
      <Row $ml={9}><Drop w={67} value="Playback" /><Drop w={59} value="Keying" /></Row>
      <Row $gap={15} $ml={8}><MenuButton>View</MenuButton><MenuButton>Marker</MenuButton></Row>
      <Row $push $gap={7} $pl={17}>
        <Button $w={18} aria-label="Auto keying"><Icon n="record" s={15} /></Button>
        <Row $gap={1}>
          {['first', 'prevKey', 'playBack', 'play', 'nextKey', 'last'].map(n => (
            <Button key={n} $w={19} aria-label={n}><Icon n={n} s={15} c="#f0f0f0" /></Button>
          ))}
        </Row>
      </Row>
      <Row $push $gap={7}>
        <NumberField $w={73} aria-label="Current frame" defaultValue="12" />
        <Row $gap={1}>
          <Button $w={19} aria-label="Use preview range"><Icon n="stopwatch" s={15} /></Button>
          <NumberLabel $w={86}>Start<input defaultValue="1" /></NumberLabel>
          <NumberLabel $w={84}>End<input defaultValue="250" /></NumberLabel>
        </Row>
      </Row>
    </Header>
    <Ruler>
      {STEPS.map(s => <RulerCell key={s}>{s}</RulerCell>)}
      <Frame>12</Frame>
    </Ruler>
    <Track>{STEPS.map(s => <TrackCell key={s} />)}</Track>
    <ScrollBar />
  </Area>
);

/* ---------- outliner ---------- */

const Tree = styled.div`
  flex: none;
  padding-top: 1px;
`;

const TreeRow = styled.div`
  display: flex;
  align-items: center;
  gap: 5px;
  height: 20px;
  padding: 0 3px 0 ${p => p.$pl}px;
  color: ${p => (p.$sel ? '#eda453' : p.$dim ? '#777' : '#c8c8c8')};
  background: ${p => (p.$sel ? '#3b5689' : p.$odd ? '#2c2c2c' : '#282828')};
  & > svg:last-child { margin-left: auto; }
`;

const TreeName = styled.span`
  flex: 0 1 auto;
  width: ${p => (p.$w ? p.$w + 'px' : 'auto')};
  overflow: hidden;
  white-space: nowrap;
`;

const Branch = styled.span`
  display: flex;
  align-items: center;
  width: 14px;
  height: 20px;
  margin-right: -7px;
  border-left: 1px solid #6a6a6a;
  color: ${p => (p.$sel ? '#ccc' : '#777')};
  background: linear-gradient(#5c5c5c, #5c5c5c) center / 100% 1px no-repeat;
`;

const IconHalo = styled.span`
  display: grid;
  place-items: center;
  width: 18px;
  height: 18px;
  border-radius: 4px;
  background: ${p => (p.$on ? '#ffffff2e' : 'none')};
`;

const SearchBox = styled.label`
  display: flex;
  align-items: center;
  width: 110px;
  height: 18px;
  padding-left: 4px;
  background: #1d1d1d;
  border-radius: 3px;
`;

const Outliner = () => (
  <Area $bg="#282828" style={{ flex: '208 1 0' }}>
    <Header $pl={10}>
      <Row $gap={8}>
        <IconDrop icon="outliner" label="Editor type" />
        <IconDrop icon="layers" label="Display mode" />
      </Row>
      <Row $ml={19}>
        <SearchBox><Icon n="search" s={14} /><TextField $w={90} aria-label="Search" /></SearchBox>
      </Row>
    </Header>
    <Tree>
      <TreeRow $pl={23}><Icon n="collection" s={15} /><TreeName>Scene Collection</TreeName></TreeRow>
      <TreeRow $pl={25} $odd>
        <Icon n="triDown" s={10} />
        <Row $ml={5}><Check $white defaultChecked aria-label="Enable collection" /></Row>
        <IconHalo $on><Icon n="collection" s={14} c="#e8e8e8" /></IconHalo>
        <TreeName>Collection</TreeName>
        <Icon n="eye" s={14} c="#ddd" />
      </TreeRow>
      <TreeRow $pl={49} $dim>
        <Branch><Icon n="triRight" s={9} /></Branch>
        <IconHalo><Icon n="imageSolid" s={14} c="#8d5f3d" /></IconHalo>
        <TreeName $w={49}>Empty</TreeName>
        <Icon n="image" s={15} c="#6b3c48" />
        <Icon n="eyeOff" s={14} c="#999" />
      </TreeRow>
      {[0, 1, 2, 3, 4, 5].map(i => (
        <TreeRow key={i} $pl={49} $odd={i % 2 === 0} $dim $sel={i === 4}>
          <Branch $sel={i === 4}><Icon n="triRight" s={9} /></Branch>
          <IconHalo $on={i === 4}><Icon n="mesh" s={15} c={i === 4 ? '#f09b6c' : '#96643f'} /></IconHalo>
          <TreeName $w={111}>fefe0ed509ac682a1c</TreeName>
          <Icon n={i === 4 ? 'eye' : 'eyeOff'} s={14} c={i === 4 ? '#ddd' : '#999'} />
        </TreeRow>
      ))}
    </Tree>
  </Area>
);

/* ---------- properties ---------- */

const PropBody = styled.div`
  display: flex;
  flex: 1;
  min-height: 0;
  overflow: hidden;
`;

const PropTabs = styled.div`
  display: flex;
  flex: none;
  flex-direction: column;
  gap: 2px;
  width: 28px;
  padding-left: 2px;
  margin-top: -6px;
  background: #1f1f1f;
`;

const PropTab = styled.button`
  display: grid;
  flex: none;
  place-items: center;
  height: 26px;
  margin-bottom: ${p => (p.$last ? 8 : 0)}px;
  background: ${p => (p.$on ? '#424242' : '#292929')};
  border-radius: 3px 0 0 3px;
`;

const PropContent = styled.div`
  flex: 1;
  min-width: 0;
  padding: 9px 0 0 9px;
  overflow: hidden;
  background: #424242;
`;

const SlotArea = styled.div`
  display: flex;
  gap: 10px;
`;

const SlotList = styled.div`
  flex: none;
  width: 150px;
  height: 98px;
  padding: 5px;
  background: #333;
  border-radius: 3px;
`;

const Slot = styled.div`
  display: flex;
  align-items: center;
  gap: 8px;
  height: 18px;
  margin-bottom: 2px;
  padding-left: 2px;
  color: #e2e2e2;
  background: ${p => (p.$on ? '#646974' : 'none')};
  border-radius: 2px;
`;

const SlotFoot = styled.div`
  display: flex;
  align-items: center;
  gap: 60px;
  height: 16px;
  margin-top: 36px;
  padding-left: 4px;
  & i { margin: 0; }
`;

const SlotButtons = styled.div`
  display: flex;
  flex-direction: column;
  gap: 8px;
`;

const ButtonStack = styled.div`
  display: flex;
  flex-direction: column;
  gap: 1px;
`;

const IdRow = styled.div`
  display: flex;
  width: 220px;
  gap: 10px;
  margin: 9px 0 10px;
`;

const TABS = [
  ['tool', '#ccc', true], ['render', '#ccc'], ['output', '#ccc'], ['layers', '#ccc'], ['scene', '#ccc'], ['world', '#c8525f', true],
  ['object', '#e08a3c'], ['wrench', '#6b95d6'], ['particles', '#6b8cc8'], ['physics', '#6ba0d6'], ['constraint', '#7aa0d6'],
  ['meshData', '#23bd80'], ['material', '#ee6f78', true], ['texture', '#c9606c'],
];

const PropPanel = styled(PanelHead)`
  gap: 3px;
  padding-left: 0;
  padding-right: 2px;
  color: #d0d0d0;
`;

const Properties = () => (
  <Area $bg="#303030" style={{ flex: '446 1 0' }}>
    <Header $pl={10}>
      <IconDrop icon="props" label="Editor type" />
      <Row $ml={16} $gap={9}><Icon n="object" s={14} />fefe0ed509ac682a1cb7c10</Row>
    </Header>
    <PropBody>
      <PropTabs>
        {TABS.map(([n, c, last]) => (
          <PropTab key={n} $last={last} $on={n === 'material'} aria-label={n}><Icon n={n} s={15} c={c} /></PropTab>
        ))}
      </PropTabs>
      <PropContent>
        <SlotArea>
          <SlotList>
            <Slot><Icon n="ball" s={13} />demo material</Slot>
            <Slot $on><Icon n="ball" s={13} />demo material</Slot>
            <SlotFoot><Tri /><Dots /></SlotFoot>
          </SlotList>
          <SlotButtons>
            <ButtonStack>
              <Button $w={19} $h={19} aria-label="Add slot"><Icon n="plus" s={13} /></Button>
              <Button $w={19} $h={19} aria-label="Remove slot"><Icon n="minus" s={13} /></Button>
              <Button $w={19} $dark aria-label="Slot specials"><Icon n="chevron" s={15} /></Button>
            </ButtonStack>
            <ButtonStack>
              <Button $w={19} aria-label="Move up"><Icon n="up" s={12} c="#fff" /></Button>
              <Button $w={19} aria-label="Move down"><Icon n="down" s={12} c="#fff" /></Button>
            </ButtonStack>
          </SlotButtons>
        </SlotArea>
        <IdRow>
          <Row>
            <Button $w={21} $dark aria-label="Browse material"><Icon n="material" s={14} /></Button>
            <TextField $w={28} aria-label="Material name" defaultValue="de" />
            <Button $w={17}>4</Button>
            <Button $w={14} $on aria-label="Fake user"><Icon n="shieldCheck" s={14} c="#fff" /></Button>
            <Button $w={14} aria-label="New material"><Icon n="copy" s={14} /></Button>
            <Button $w={15} aria-label="Unlink"><Icon n="close" s={12} /></Button>
          </Row>
          <Drop w={60} value="Data" />
        </IdRow>
        {['Preview', 'Surface', 'Volume', 'Displacement', 'Settings', 'Viewport Display'].map(p => (
          <PropPanel key={p}><Tri />{p}<Dots /></PropPanel>
        ))}
      </PropContent>
    </PropBody>
  </Area>
);

/* ---------- page ---------- */

const Main = styled.main`
  display: flex;
  flex: 1;
  gap: 3px;
  min-height: 0;
`;

const Column = styled.div`
  display: flex;
  flex-direction: column;
  gap: 3px;
  flex: ${p => p.$flex};
  min-width: 0;
`;

const Split = styled.div`
  display: flex;
  gap: 3px;
  flex: 307 1 0;
  min-height: 0;
`;

const StatusBar = styled.footer`
  display: flex;
  flex: none;
  align-items: center;
  height: 20px;
  color: #a6a6a6;
  background: #303030;
  white-space: nowrap;
`;

const Hint = styled.span`
  display: flex;
  align-items: center;
  gap: 9px;
  width: 236px;
  padding-left: 2px;
`;

const Stats = styled.span`
  width: 612px;
  margin-left: auto;
  overflow: hidden;
`;

export default function App() {
  return (
    <Screen>
      <GlobalStyle />
      <Top />
      <Main>
        <Column $flex="1 1 0">
          <Split>
            <ImageEditor />
            <Viewport />
          </Split>
          <ShaderEditor />
          <Timeline />
        </Column>
        <Column $flex="0 0 216px">
          <Outliner />
          <Properties />
        </Column>
      </Main>
      <StatusBar>
        <Hint><Icon n="mouseL" s={15} />Change Frame</Hint>
        <Hint><Icon n="mouseM" s={15} />Pan View</Hint>
        <Hint><Icon n="mouseR" s={15} /></Hint>
        <Stats>Collection | fefe0ed509ac682a1cb7c103580c1ba9.005 | Verts:3,923 | Faces:7,108 | Tris:7,858 | Objects:1/1 | Mem: 178</Stats>
      </StatusBar>
    </Screen>
  );
}
